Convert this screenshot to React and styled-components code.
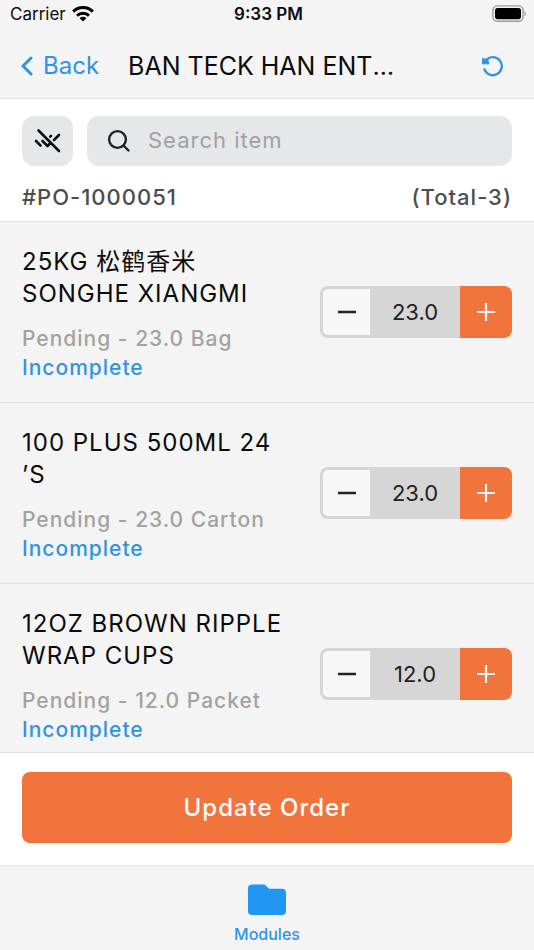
import React, { useState } from "react";
import styled, { createGlobalStyle } from "styled-components";

const blue = "#2f93e6";
const orange = "#f2743d";
const surface = "#f4f4f4";
const line = "#e2e2e3";

const GlobalStyle = createGlobalStyle`
  *, *::before, *::after { box-sizing: border-box; }
  body { margin: 0; background: #fff; }
  body, button, input { font-family: Inter, "Noto Sans CJK SC", sans-serif; }
  h1, h2, p, ul { margin: 0; padding: 0; }
  button { border: 0; padding: 0; background: none; color: inherit; cursor: pointer; }
  svg { display: block; flex: none; }
`;

const Screen = styled.div`
  display: flex;
  flex-direction: column;
  height: 100vh;
  background: ${surface};
  color: #0b0b0b;
`;

const StatusBar = styled.div`
  display: grid;
  grid-template-columns: 1fr auto 1fr;
  align-items: center;
  height: 28px;
  padding: 0 7px 0 10px;
  font-size: 17px;
  line-height: 24px;
`;

const Carrier = styled.span`
  display: flex;
  align-items: center;
  gap: 6px;
`;

const Clock = styled.time`
  font-weight: 600;
`;

const BatteryIcon = styled.svg`
  justify-self: end;
`;

const NavBar = styled.header`
  display: flex;
  align-items: center;
  height: 71px;
  padding: 6px 30px 0 20px;
  border-bottom: 1px solid ${line};
`;

const BackLink = styled.a`
  display: flex;
  align-items: center;
  gap: 9px;
  color: ${blue};
  font-size: 24px;
  line-height: 32px;
  text-decoration: none;
`;

const Title = styled.h1`
  width: 272px;
  margin: 0 auto 0 29px;
  overflow: hidden;
  white-space: nowrap;
  text-overflow: ellipsis;
  font-size: 25px;
  font-weight: 400;
  line-height: 32px;
`;

const RefreshButton = styled.button`
  color: ${blue};
`;

const Filters = styled.section`
  padding: 17px 22px 8px;
  background: #fff;
  border-bottom: 1px solid ${line};
`;

const SearchRow = styled.div`
  display: flex;
  gap: 14px;
`;

const FilterButton = styled.button`
  display: grid;
  place-items: center;
  width: 51px;
  height: 50px;
  border-radius: 12px;
  background: #e6e7e9;
`;

const SearchField = styled.label`
  display: flex;
  flex: 1;
  align-items: center;
  gap: 18px;
  height: 50px;
  padding: 0 20px 2px;
  border-radius: 12px;
  background: #e6e7e9;
`;

const SearchInput = styled.input`
  flex: 1;
  min-width: 0;
  padding: 0;
  border: 0;
  outline: 0;
  background: none;
  color: #222;
  font-size: 22px;
  line-height: 32px;
  letter-spacing: 1px;
  &::placeholder { color: #a0a1a3; opacity: 1; }
`;

const OrderSummary = styled.div`
  display: flex;
  justify-content: space-between;
  padding-top: 15px;
  color: #4d4d4d;
  font-size: 22px;
  font-weight: 500;
  line-height: 32px;
  letter-spacing: 1px;
`;

const ItemList = styled.ul`
  flex: 1;
  min-height: 0;
  overflow-y: auto;
  list-style: none;
  scrollbar-width: none;
`;

const Item = styled.li`
  display: flex;
  align-items: center;
  gap: 24px;
  padding: 20px 22px;
  border-bottom: 1px solid ${line};
`;

const ItemText = styled.div`
  flex: 1;
  min-width: 0;
  padding-top: 4px;
`;

const ItemName = styled.h2`
  margin-bottom: 14px;
  font-size: 24px;
  font-weight: 400;
  line-height: 32px;
  letter-spacing: 1px;
`;

const ItemStatus = styled.p`
  color: ${(p) => (p.$active ? blue : "#a2a2a2")};
  font-size: 21px;
  font-weight: 500;
  line-height: 29px;
  letter-spacing: 1px;
`;

const Stepper = styled.div`
  display: flex;
  width: 192px;
  height: 52px;
  overflow: hidden;
  border-radius: 8px;
  background: #d6d6d6;
`;

const StepButton = styled.button`
  display: grid;
  place-items: center;
  width: ${(p) => (p.$primary ? "52px" : "50px")};
  border: ${(p) => (p.$primary ? "0" : "3px solid #d6d6d6")};
  border-right: 0;
  border-radius: ${(p) => (p.$primary ? "0" : "8px 0 0 8px")};
  background: ${(p) => (p.$primary ? orange : "#f7f7f7")};
  color: ${(p) => (p.$primary ? "#fff" : "#222")};
`;

const Quantity = styled.input`
  flex: 1;
  min-width: 0;
  padding: 0;
  border: 0;
  outline: 0;
  background: none;
  color: #222;
  font-size: 22px;
  text-align: center;
`;

const ActionBar = styled.section`
  padding: 19px 22px 22px;
  border-top: 1px solid ${line};
  border-bottom: 1px solid ${line};
  background: #fff;
`;

const UpdateButton = styled.button`
  width: 100%;
  height: 71px;
  border-radius: 8px;
  background: ${orange};
  color: #fff;
  font-size: 24px;
  font-weight: 500;
  letter-spacing: 1px;
`;

const TabBar = styled.nav`
  display: flex;
  justify-content: center;
  height: 84px;
  padding-top: 18px;
`;

const Tab = styled.a`
  display: flex;
  flex-direction: column;
  align-items: center;
  gap: 8px;
  color: ${blue};
  font-size: 16px;
  font-weight: 500;
  line-height: 20px;
  text-decoration: none;
`;

const ITEMS = [
  { name: "25KG 松鹤香米 SONGHE XIANGMI", quantity: 23, unit: "Bag" },
  { name: "100 PLUS 500ML 24 ’S", quantity: 23, unit: "Carton" },
  { name: "12OZ BROWN RIPPLE WRAP CUPS", quantity: 12, unit: "Packet" },
];

function OrderItem({ item }) {
  const [value, setValue] = useState(item.quantity.toFixed(1));
  const step = (by) => setValue(Math.max(0, (Number(value) || 0) + by).toFixed(1));
  return (
    <Item>
      <ItemText>
        <ItemName>{item.name}</ItemName>
        <ItemStatus>{`Pending - ${item.quantity.toFixed(1)} ${item.unit}`}</ItemStatus>
        <ItemStatus $active>Incomplete</ItemStatus>
      </ItemText>
      <Stepper>
        <StepButton type="button" aria-label="Decrease quantity" onClick={() => step(-1)}>
          <svg width="20" height="20" viewBox="0 0 20 20" fill="none" stroke="currentColor" strokeWidth="2.4">
            <path d="M1 10h18" />
          </svg>
        </StepButton>
        <Quantity
          inputMode="decimal"
          aria-label={`Quantity of ${item.name}`}
          value={value}
          onChange={(e) => setValue(e.target.value)}
        />
        <StepButton $primary type="button" aria-label="Increase quantity" onClick={() => step(1)}>
          <svg width="20" height="20" viewBox="0 0 20 20" fill="none" stroke="currentColor" strokeWidth="2.2">
            <path d="M1 10h18M10 1v18" />
          </svg>
        </StepButton>
      </Stepper>
    </Item>
  );
}

export default function App() {
  return (
    <>
      <GlobalStyle />
      <Screen>
        <StatusBar>
          <Carrier>
            Carrier
            <svg width="22" height="16" viewBox="0 0 22 16" fill="none" stroke="#000" strokeWidth="3">
              <path d="M1.2 5.6a14 14 0 0 1 19.6 0M5 9.6a8.6 8.6 0 0 1 12 0" />
              <path d="M11 15.6L7.6 12.2a4.8 4.8 0 0 1 6.8 0z" fill="#000" stroke="none" />
            </svg>
          </Carrier>
          <Clock>9:33 PM</Clock>
          <BatteryIcon width="35" height="18" viewBox="0 0 35 18">
            <rect x="0.9" y="0.9" width="30.2" height="15.4" rx="4.6" fill="none" stroke="#999" strokeWidth="1.4" />
            <rect x="3" y="3" width="26" height="11.2" rx="2.6" fill="#000" />
            <path d="M32.6 6.2c1.8.8 1.8 4 0 4.8z" fill="#999" />
          </BatteryIcon>
        </StatusBar>
        <NavBar>
          <BackLink href="#back">
            <svg width="14" height="20" viewBox="0 0 14 20" fill="none" stroke="currentColor" strokeWidth="3" strokeLinecap="round" strokeLinejoin="round">
              <path d="M11 2L3 10l8 8" />
            </svg>
            Back
          </BackLink>
          <Title>BAN TECK HAN ENTERPRISE</Title>
          <RefreshButton type="button" aria-label="Reload order">
            <svg width="22" height="22" viewBox="0 0 22 22" fill="none" stroke="currentColor" strokeWidth="2.4" strokeLinecap="round">
              <path d="M2.4 14.4A9 9 0 1 0 4.6 4.6" />
              <path d="M.9 3.400L2.800 4.400L5.400 3.600L7 8.800H.9z" fill="currentColor" strokeWidth="1" strokeLinejoin="round" />
            </svg>
          </RefreshButton>
        </NavBar>
        <Filters>
          <SearchRow>
            <FilterButton type="button" aria-label="Hide completed items">
              <svg width="28" height="26" viewBox="0 0 28 26" fill="none" stroke="#111" strokeWidth="2.6" strokeLinecap="round" strokeLinejoin="round">
                <path d="M4.500 2.500l20.500 20.500M2 13l4.500 4.500M8.500 13l5 5 2-2M17 7.800l-.8.8M25 7l-5 5" />
              </svg>
            </FilterButton>
            <SearchField>
              <svg width="23" height="23" viewBox="0 0 23 23" fill="none" stroke="#222" strokeWidth="2.4" strokeLinecap="round">
                <circle cx="10.500" cy="10.500" r="8.400" />
                <path d="M16.800 16.800l4.700 4.700" />
              </svg>
              <SearchInput placeholder="Search item" aria-label="Search item" />
            </SearchField>
          </SearchRow>
          <OrderSummary>
            <span>#PO-1000051</span>
            <span>(Total-3)</span>
          </OrderSummary>
        </Filters>
        <ItemList>
          {ITEMS.map((item) => (
            <OrderItem key={item.name} item={item} />
          ))}
        </ItemList>
        <ActionBar>
          <UpdateButton type="button">Update Order</UpdateButton>
        </ActionBar>
        <TabBar>
          <Tab href="#modules">
            <svg width="38" height="32" viewBox="0 0 38 32" fill="#2196f3">
              <path d="M4 .5h11.500c1 0 1.700.3 2.400 1l3.100 3.300H34a4 4 0 0 1 4 4V27a4 4 0 0 1-4 4H4a4 4 0 0 1-4-4V4.500a4 4 0 0 1 4-4z" />
            </svg>
            Modules
          </Tab>
        </TabBar>
      </Screen>
    </>
  );
}
